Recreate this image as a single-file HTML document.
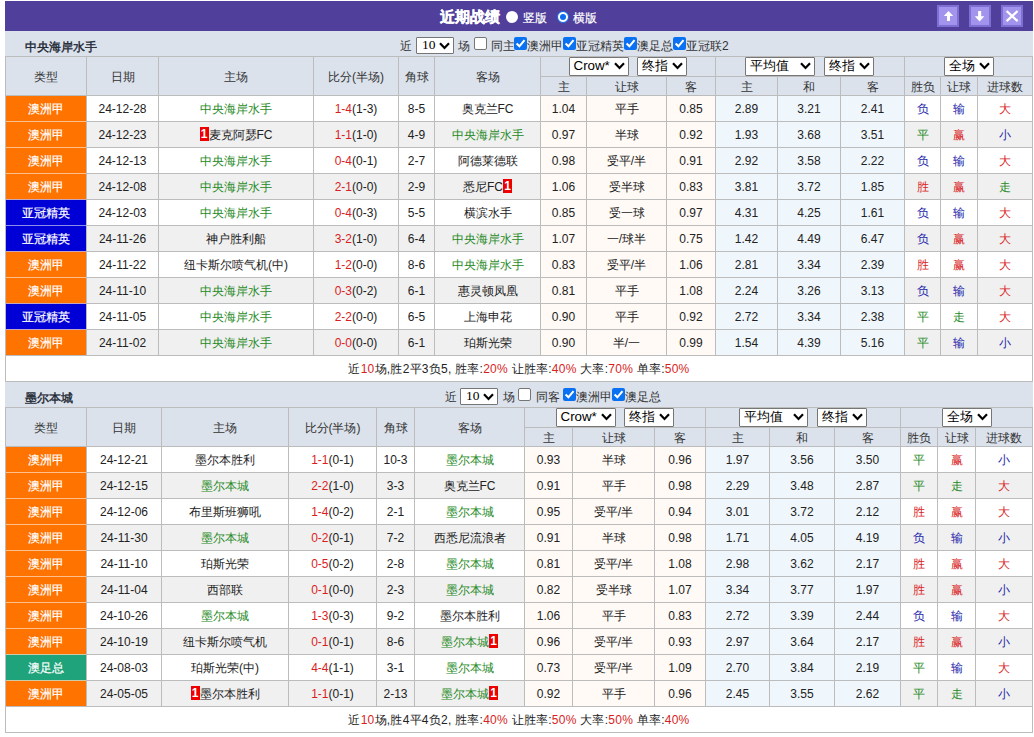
<!DOCTYPE html><html><head><meta charset="utf-8"><style>
*{margin:0;padding:0;box-sizing:content-box}
html,body{width:1034px;height:737px;overflow:hidden;background:#fff}
body{position:relative;font-family:"Liberation Sans",sans-serif;font-size:12px;color:#333}
body>div,body>svg{position:absolute}
.t{white-space:nowrap;overflow:visible}
.sel{position:absolute;background:#fff;border:1px solid #767676;border-radius:1px;color:#000}
.sel span{position:absolute;left:3.5px;top:-1px}
.sel .chev{position:absolute;right:3px}
.cb{position:absolute;width:11px;height:11px;border:1px solid #767676;border-radius:2px;background:#fff}
.cb.on{border:none;width:13px;height:13px;background:#0a72f2}
.cb svg{position:absolute;left:0;top:0}
.rc{display:inline-block;background:#e00;color:#fff;font-weight:bold;width:9px;height:14px;line-height:14px;text-align:center;font-size:12px;vertical-align:middle;position:relative;top:-2px}
</style></head><body>
<div style="left:5px;top:1px;width:1028px;height:30px;background:#50409b"></div>
<div class="t" style="left:440px;top:2px;width:70px;height:30px;line-height:30px;color:#fff;font-weight:bold;font-size:15px;-webkit-text-stroke:0.35px #fff">近期战绩</div>
<div style="left:506px;top:11px;width:12px;height:12px;border-radius:50%;background:#fff"></div>
<div class="t" style="left:523px;top:3px;width:30px;height:30px;line-height:30px;color:#fff;font-size:12px;-webkit-text-stroke:0.2px #fff">竖版</div>
<div style="left:557px;top:11px;width:10px;height:10px;border-radius:50%;background:#fff;border:1px solid #0a6cf0"></div>
<div style="left:560px;top:14px;width:6px;height:6px;border-radius:50%;background:#0a6cf0"></div>
<div class="t" style="left:573px;top:3px;width:30px;height:30px;line-height:30px;color:#fff;font-size:12px;-webkit-text-stroke:0.2px #fff">横版</div>
<div style="left:937px;top:5px;width:22px;height:22px;background:#7e6fd3"></div>
<div style="left:939px;top:7px;width:18px;height:18px;background:#a293ec"></div>
<svg style="position:absolute;left:937px;top:5px" width="22" height="22" viewBox="0 0 22 22"><path d="M11.5 6 L16.2 11 L13 11 L13 16 L10 16 L10 11 L6.8 11 Z" fill="#fff"/></svg>
<div style="left:969px;top:5px;width:22px;height:22px;background:#7e6fd3"></div>
<div style="left:971px;top:7px;width:18px;height:18px;background:#a293ec"></div>
<svg style="position:absolute;left:969px;top:5px" width="22" height="22" viewBox="0 0 22 22"><path d="M10.6 16.6 L15.4 11.2 L12.2 11.2 L12.2 6 L9.1 6 L9.1 11.2 L5.8 11.2 Z" fill="#fff"/></svg>
<div style="left:1001px;top:5px;width:22px;height:22px;background:#7e6fd3"></div>
<div style="left:1003px;top:7px;width:18px;height:18px;background:#a293ec"></div>
<svg style="position:absolute;left:1001px;top:5px" width="22" height="22" viewBox="0 0 22 22"><path d="M5.6 6 L16.6 16.2 M16.6 6 L5.6 16.2" stroke="#fff" stroke-width="2.3"/></svg>
<div style="left:5px;top:31px;width:1028px;height:25px;background:#dbe2ec"></div>
<div class="t" style="left:25px;top:35px;width:200px;height:25px;line-height:25px;font-size:12px;color:#1e2834;-webkit-text-stroke:0.4px #1e2834">中央海岸水手</div>
<div class="t" style="left:400px;top:34px;width:14px;height:25px;line-height:25px;font-size:12px;color:#333">近</div>
<div class="sel" style="left:416px;top:37px;width:36px;height:15px;"><span style="font-size:12px;line-height:15px;font-family:'Liberation Serif',serif;left:5px;top:-1px;font-size:13.5px;">10</span><svg class="chev" style="top:4px" width="11" height="8" viewBox="0 0 11 8"><path d="M1 1.2 L5.5 5.9 L10 1.2" stroke="#000" stroke-width="2.2" fill="none"/></svg></div>
<div class="t" style="left:458px;top:34px;width:14px;height:25px;line-height:25px;font-size:12px;color:#333">场</div>
<div class="cb" style="left:474px;top:37px"></div>
<div class="t" style="left:491px;top:34px;width:30px;height:25px;line-height:25px;font-size:12px;color:#333">同主</div>
<div class="cb on" style="left:514px;top:37px"><svg width="13" height="13" viewBox="0 0 13 13"><path d="M2.6 6.6 L5.4 9.3 L10.5 3.2" stroke="#fff" stroke-width="2.1" fill="none"/></svg></div>
<div class="t" style="left:527px;top:34px;width:60px;height:25px;line-height:25px;font-size:12px;color:#333">澳洲甲</div>
<div class="cb on" style="left:563px;top:37px"><svg width="13" height="13" viewBox="0 0 13 13"><path d="M2.6 6.6 L5.4 9.3 L10.5 3.2" stroke="#fff" stroke-width="2.1" fill="none"/></svg></div>
<div class="t" style="left:576px;top:34px;width:60px;height:25px;line-height:25px;font-size:12px;color:#333">亚冠精英</div>
<div class="cb on" style="left:624px;top:37px"><svg width="13" height="13" viewBox="0 0 13 13"><path d="M2.6 6.6 L5.4 9.3 L10.5 3.2" stroke="#fff" stroke-width="2.1" fill="none"/></svg></div>
<div class="t" style="left:637px;top:34px;width:60px;height:25px;line-height:25px;font-size:12px;color:#333">澳足总</div>
<div class="cb on" style="left:673px;top:37px"><svg width="13" height="13" viewBox="0 0 13 13"><path d="M2.6 6.6 L5.4 9.3 L10.5 3.2" stroke="#fff" stroke-width="2.1" fill="none"/></svg></div>
<div class="t" style="left:686px;top:34px;width:60px;height:25px;line-height:25px;font-size:12px;color:#333">亚冠联2</div>
<div style="left:5px;top:56px;width:1028px;height:39px;background:#dbe2ec"></div>
<div style="left:5px;top:95px;width:1028px;height:26px;background:#fff"></div>
<div style="left:540px;top:95px;width:175px;height:26px;background:#fffaf6"></div>
<div style="left:715px;top:95px;width:189px;height:26px;background:#f0f7fc"></div>
<div style="left:5px;top:95px;width:81px;height:26px;background:#ff7300"></div>
<div style="left:5px;top:121px;width:1028px;height:26px;background:#f0f0f0"></div>
<div style="left:540px;top:121px;width:175px;height:26px;background:#fffaf6"></div>
<div style="left:715px;top:121px;width:189px;height:26px;background:#f0f7fc"></div>
<div style="left:5px;top:121px;width:81px;height:26px;background:#ff7300"></div>
<div style="left:5px;top:147px;width:1028px;height:26px;background:#fff"></div>
<div style="left:540px;top:147px;width:175px;height:26px;background:#fffaf6"></div>
<div style="left:715px;top:147px;width:189px;height:26px;background:#f0f7fc"></div>
<div style="left:5px;top:147px;width:81px;height:26px;background:#ff7300"></div>
<div style="left:5px;top:173px;width:1028px;height:26px;background:#f0f0f0"></div>
<div style="left:540px;top:173px;width:175px;height:26px;background:#fffaf6"></div>
<div style="left:715px;top:173px;width:189px;height:26px;background:#f0f7fc"></div>
<div style="left:5px;top:173px;width:81px;height:26px;background:#ff7300"></div>
<div style="left:5px;top:199px;width:1028px;height:26px;background:#fff"></div>
<div style="left:540px;top:199px;width:175px;height:26px;background:#fffaf6"></div>
<div style="left:715px;top:199px;width:189px;height:26px;background:#f0f7fc"></div>
<div style="left:5px;top:199px;width:81px;height:26px;background:#0000d6"></div>
<div style="left:5px;top:225px;width:1028px;height:26px;background:#f0f0f0"></div>
<div style="left:540px;top:225px;width:175px;height:26px;background:#fffaf6"></div>
<div style="left:715px;top:225px;width:189px;height:26px;background:#f0f7fc"></div>
<div style="left:5px;top:225px;width:81px;height:26px;background:#0000d6"></div>
<div style="left:5px;top:251px;width:1028px;height:26px;background:#fff"></div>
<div style="left:540px;top:251px;width:175px;height:26px;background:#fffaf6"></div>
<div style="left:715px;top:251px;width:189px;height:26px;background:#f0f7fc"></div>
<div style="left:5px;top:251px;width:81px;height:26px;background:#ff7300"></div>
<div style="left:5px;top:277px;width:1028px;height:26px;background:#f0f0f0"></div>
<div style="left:540px;top:277px;width:175px;height:26px;background:#fffaf6"></div>
<div style="left:715px;top:277px;width:189px;height:26px;background:#f0f7fc"></div>
<div style="left:5px;top:277px;width:81px;height:26px;background:#ff7300"></div>
<div style="left:5px;top:303px;width:1028px;height:26px;background:#fff"></div>
<div style="left:540px;top:303px;width:175px;height:26px;background:#fffaf6"></div>
<div style="left:715px;top:303px;width:189px;height:26px;background:#f0f7fc"></div>
<div style="left:5px;top:303px;width:81px;height:26px;background:#0000d6"></div>
<div style="left:5px;top:329px;width:1028px;height:26px;background:#f0f0f0"></div>
<div style="left:540px;top:329px;width:175px;height:26px;background:#fffaf6"></div>
<div style="left:715px;top:329px;width:189px;height:26px;background:#f0f7fc"></div>
<div style="left:5px;top:329px;width:81px;height:26px;background:#ff7300"></div>
<div style="left:5px;top:355px;width:1028px;height:26px;background:#fff"></div>
<div style="left:5px;top:56px;width:1028px;height:1px;background:#bcbcbc"></div>
<div style="left:540px;top:76px;width:493px;height:1px;background:#bcbcbc"></div>
<div style="left:5px;top:95px;width:1028px;height:1px;background:#bcbcbc"></div>
<div style="left:5px;top:121px;width:1028px;height:1px;background:#bcbcbc"></div>
<div style="left:5px;top:147px;width:1028px;height:1px;background:#bcbcbc"></div>
<div style="left:5px;top:173px;width:1028px;height:1px;background:#bcbcbc"></div>
<div style="left:5px;top:199px;width:1028px;height:1px;background:#bcbcbc"></div>
<div style="left:5px;top:225px;width:1028px;height:1px;background:#bcbcbc"></div>
<div style="left:5px;top:251px;width:1028px;height:1px;background:#bcbcbc"></div>
<div style="left:5px;top:277px;width:1028px;height:1px;background:#bcbcbc"></div>
<div style="left:5px;top:303px;width:1028px;height:1px;background:#bcbcbc"></div>
<div style="left:5px;top:329px;width:1028px;height:1px;background:#bcbcbc"></div>
<div style="left:5px;top:355px;width:1028px;height:1px;background:#bcbcbc"></div>
<div style="left:5px;top:381px;width:1028px;height:1px;background:#bcbcbc"></div>
<div style="left:6px;top:121px;width:80px;height:1px;background:#ffc08c"></div>
<div style="left:6px;top:147px;width:80px;height:1px;background:#ffc08c"></div>
<div style="left:6px;top:173px;width:80px;height:1px;background:#ffc08c"></div>
<div style="left:6px;top:199px;width:80px;height:1px;background:#c5a6bc"></div>
<div style="left:6px;top:225px;width:80px;height:1px;background:#8c8cec"></div>
<div style="left:6px;top:251px;width:80px;height:1px;background:#c5a6bc"></div>
<div style="left:6px;top:277px;width:80px;height:1px;background:#ffc08c"></div>
<div style="left:6px;top:303px;width:80px;height:1px;background:#c5a6bc"></div>
<div style="left:6px;top:329px;width:80px;height:1px;background:#c5a6bc"></div>
<div style="left:5px;top:56px;width:1px;height:326px;background:#bcbcbc"></div>
<div style="left:86px;top:56px;width:1px;height:300px;background:#bcbcbc"></div>
<div style="left:158px;top:56px;width:1px;height:300px;background:#bcbcbc"></div>
<div style="left:313px;top:56px;width:1px;height:300px;background:#bcbcbc"></div>
<div style="left:398px;top:56px;width:1px;height:300px;background:#bcbcbc"></div>
<div style="left:434px;top:56px;width:1px;height:300px;background:#bcbcbc"></div>
<div style="left:540px;top:56px;width:1px;height:300px;background:#bcbcbc"></div>
<div style="left:586px;top:76px;width:1px;height:280px;background:#bcbcbc"></div>
<div style="left:666px;top:76px;width:1px;height:280px;background:#bcbcbc"></div>
<div style="left:715px;top:56px;width:1px;height:300px;background:#bcbcbc"></div>
<div style="left:777px;top:76px;width:1px;height:280px;background:#bcbcbc"></div>
<div style="left:840px;top:76px;width:1px;height:280px;background:#bcbcbc"></div>
<div style="left:904px;top:56px;width:1px;height:300px;background:#bcbcbc"></div>
<div style="left:940px;top:76px;width:1px;height:280px;background:#bcbcbc"></div>
<div style="left:977px;top:76px;width:1px;height:280px;background:#bcbcbc"></div>
<div style="left:1032px;top:56px;width:1px;height:326px;background:#bcbcbc"></div>
<div class="t" style="left:6px;top:58px;width:80px;height:38px;line-height:38px;text-align:center;font-size:12px;color:#333;">类型</div>
<div class="t" style="left:87px;top:58px;width:71px;height:38px;line-height:38px;text-align:center;font-size:12px;color:#333;">日期</div>
<div class="t" style="left:159px;top:58px;width:154px;height:38px;line-height:38px;text-align:center;font-size:12px;color:#333;">主场</div>
<div class="t" style="left:314px;top:58px;width:84px;height:38px;line-height:38px;text-align:center;font-size:12px;color:#333;">比分(半场)</div>
<div class="t" style="left:399px;top:58px;width:35px;height:38px;line-height:38px;text-align:center;font-size:12px;color:#333;">角球</div>
<div class="t" style="left:435px;top:58px;width:105px;height:38px;line-height:38px;text-align:center;font-size:12px;color:#333;">客场</div>
<div class="t" style="left:541px;top:78px;width:45px;height:18px;line-height:18px;text-align:center;font-size:12px;color:#333;">主</div>
<div class="t" style="left:587px;top:78px;width:79px;height:18px;line-height:18px;text-align:center;font-size:12px;color:#333;">让球</div>
<div class="t" style="left:667px;top:78px;width:48px;height:18px;line-height:18px;text-align:center;font-size:12px;color:#333;">客</div>
<div class="t" style="left:716px;top:78px;width:61px;height:18px;line-height:18px;text-align:center;font-size:12px;color:#333;">主</div>
<div class="t" style="left:778px;top:78px;width:62px;height:18px;line-height:18px;text-align:center;font-size:12px;color:#333;">和</div>
<div class="t" style="left:841px;top:78px;width:63px;height:18px;line-height:18px;text-align:center;font-size:12px;color:#333;">客</div>
<div class="t" style="left:905px;top:78px;width:35px;height:18px;line-height:18px;text-align:center;font-size:12px;color:#333;">胜负</div>
<div class="t" style="left:941px;top:78px;width:36px;height:18px;line-height:18px;text-align:center;font-size:12px;color:#333;">让球</div>
<div class="t" style="left:978px;top:78px;width:54px;height:18px;line-height:18px;text-align:center;font-size:12px;color:#333;">进球数</div>
<div class="sel" style="left:569px;top:57px;width:58px;height:17px;"><span style="font-size:13.33px;line-height:17px;">Crow*</span><svg class="chev" style="top:4px" width="11" height="8" viewBox="0 0 11 8"><path d="M1 1.2 L5.5 5.9 L10 1.2" stroke="#000" stroke-width="2.2" fill="none"/></svg></div>
<div class="sel" style="left:637px;top:57px;width:48px;height:17px;"><span style="font-size:13.33px;line-height:17px;">终指</span><svg class="chev" style="top:4px" width="11" height="8" viewBox="0 0 11 8"><path d="M1 1.2 L5.5 5.9 L10 1.2" stroke="#000" stroke-width="2.2" fill="none"/></svg></div>
<div class="sel" style="left:745px;top:57px;width:68px;height:17px;"><span style="font-size:13.33px;line-height:17px;">平均值</span><svg class="chev" style="top:4px" width="11" height="8" viewBox="0 0 11 8"><path d="M1 1.2 L5.5 5.9 L10 1.2" stroke="#000" stroke-width="2.2" fill="none"/></svg></div>
<div class="sel" style="left:824px;top:57px;width:48px;height:17px;"><span style="font-size:13.33px;line-height:17px;">终指</span><svg class="chev" style="top:4px" width="11" height="8" viewBox="0 0 11 8"><path d="M1 1.2 L5.5 5.9 L10 1.2" stroke="#000" stroke-width="2.2" fill="none"/></svg></div>
<div class="sel" style="left:944px;top:57px;width:48px;height:17px;"><span style="font-size:13.33px;line-height:17px;">全场</span><svg class="chev" style="top:4px" width="11" height="8" viewBox="0 0 11 8"><path d="M1 1.2 L5.5 5.9 L10 1.2" stroke="#000" stroke-width="2.2" fill="none"/></svg></div>
<div class="t" style="left:6px;top:97px;width:80px;height:25px;line-height:25px;text-align:center;font-size:12px;color:#222;color:#fff;-webkit-text-stroke:0.2px #fff">澳洲甲</div>
<div class="t" style="left:87px;top:97px;width:71px;height:25px;line-height:25px;text-align:center;font-size:12px;color:#222;">24-12-28</div>
<div class="t" style="left:159px;top:97px;width:154px;height:25px;line-height:25px;text-align:center;font-size:12px;color:#222;"><span style="color:#268a26">中央海岸水手</span></div>
<div class="t" style="left:314px;top:97px;width:84px;height:25px;line-height:25px;text-align:center;font-size:12px;color:#222;"><span style="color:#d81e1e">1-4</span>(1-3)</div>
<div class="t" style="left:399px;top:97px;width:35px;height:25px;line-height:25px;text-align:center;font-size:12px;color:#222;">8-5</div>
<div class="t" style="left:435px;top:97px;width:105px;height:25px;line-height:25px;text-align:center;font-size:12px;color:#222;">奥克兰FC</div>
<div class="t" style="left:541px;top:97px;width:45px;height:25px;line-height:25px;text-align:center;font-size:12px;color:#222;">1.04</div>
<div class="t" style="left:587px;top:97px;width:79px;height:25px;line-height:25px;text-align:center;font-size:12px;color:#222;">平手</div>
<div class="t" style="left:667px;top:97px;width:48px;height:25px;line-height:25px;text-align:center;font-size:12px;color:#222;">0.85</div>
<div class="t" style="left:716px;top:97px;width:61px;height:25px;line-height:25px;text-align:center;font-size:12px;color:#222;">2.89</div>
<div class="t" style="left:778px;top:97px;width:62px;height:25px;line-height:25px;text-align:center;font-size:12px;color:#222;">3.21</div>
<div class="t" style="left:841px;top:97px;width:63px;height:25px;line-height:25px;text-align:center;font-size:12px;color:#222;">2.41</div>
<div class="t" style="left:905px;top:97px;width:35px;height:25px;line-height:25px;text-align:center;font-size:12px;color:#222;color:#1e1eaa">负</div>
<div class="t" style="left:941px;top:97px;width:36px;height:25px;line-height:25px;text-align:center;font-size:12px;color:#222;color:#1e1eaa">输</div>
<div class="t" style="left:978px;top:97px;width:54px;height:25px;line-height:25px;text-align:center;font-size:12px;color:#222;color:#d92424">大</div>
<div class="t" style="left:6px;top:123px;width:80px;height:25px;line-height:25px;text-align:center;font-size:12px;color:#222;color:#fff;-webkit-text-stroke:0.2px #fff">澳洲甲</div>
<div class="t" style="left:87px;top:123px;width:71px;height:25px;line-height:25px;text-align:center;font-size:12px;color:#222;">24-12-23</div>
<div class="t" style="left:159px;top:123px;width:154px;height:25px;line-height:25px;text-align:center;font-size:12px;color:#222;"><span class="rc">1</span>麦克阿瑟FC</div>
<div class="t" style="left:314px;top:123px;width:84px;height:25px;line-height:25px;text-align:center;font-size:12px;color:#222;"><span style="color:#d81e1e">1-1</span>(1-0)</div>
<div class="t" style="left:399px;top:123px;width:35px;height:25px;line-height:25px;text-align:center;font-size:12px;color:#222;">4-9</div>
<div class="t" style="left:435px;top:123px;width:105px;height:25px;line-height:25px;text-align:center;font-size:12px;color:#222;"><span style="color:#268a26">中央海岸水手</span></div>
<div class="t" style="left:541px;top:123px;width:45px;height:25px;line-height:25px;text-align:center;font-size:12px;color:#222;">0.97</div>
<div class="t" style="left:587px;top:123px;width:79px;height:25px;line-height:25px;text-align:center;font-size:12px;color:#222;">半球</div>
<div class="t" style="left:667px;top:123px;width:48px;height:25px;line-height:25px;text-align:center;font-size:12px;color:#222;">0.92</div>
<div class="t" style="left:716px;top:123px;width:61px;height:25px;line-height:25px;text-align:center;font-size:12px;color:#222;">1.93</div>
<div class="t" style="left:778px;top:123px;width:62px;height:25px;line-height:25px;text-align:center;font-size:12px;color:#222;">3.68</div>
<div class="t" style="left:841px;top:123px;width:63px;height:25px;line-height:25px;text-align:center;font-size:12px;color:#222;">3.51</div>
<div class="t" style="left:905px;top:123px;width:35px;height:25px;line-height:25px;text-align:center;font-size:12px;color:#222;color:#1f8a1f">平</div>
<div class="t" style="left:941px;top:123px;width:36px;height:25px;line-height:25px;text-align:center;font-size:12px;color:#222;color:#d92424">赢</div>
<div class="t" style="left:978px;top:123px;width:54px;height:25px;line-height:25px;text-align:center;font-size:12px;color:#222;color:#1e1eaa">小</div>
<div class="t" style="left:6px;top:149px;width:80px;height:25px;line-height:25px;text-align:center;font-size:12px;color:#222;color:#fff;-webkit-text-stroke:0.2px #fff">澳洲甲</div>
<div class="t" style="left:87px;top:149px;width:71px;height:25px;line-height:25px;text-align:center;font-size:12px;color:#222;">24-12-13</div>
<div class="t" style="left:159px;top:149px;width:154px;height:25px;line-height:25px;text-align:center;font-size:12px;color:#222;"><span style="color:#268a26">中央海岸水手</span></div>
<div class="t" style="left:314px;top:149px;width:84px;height:25px;line-height:25px;text-align:center;font-size:12px;color:#222;"><span style="color:#d81e1e">0-4</span>(0-1)</div>
<div class="t" style="left:399px;top:149px;width:35px;height:25px;line-height:25px;text-align:center;font-size:12px;color:#222;">2-7</div>
<div class="t" style="left:435px;top:149px;width:105px;height:25px;line-height:25px;text-align:center;font-size:12px;color:#222;">阿德莱德联</div>
<div class="t" style="left:541px;top:149px;width:45px;height:25px;line-height:25px;text-align:center;font-size:12px;color:#222;">0.98</div>
<div class="t" style="left:587px;top:149px;width:79px;height:25px;line-height:25px;text-align:center;font-size:12px;color:#222;">受平/半</div>
<div class="t" style="left:667px;top:149px;width:48px;height:25px;line-height:25px;text-align:center;font-size:12px;color:#222;">0.91</div>
<div class="t" style="left:716px;top:149px;width:61px;height:25px;line-height:25px;text-align:center;font-size:12px;color:#222;">2.92</div>
<div class="t" style="left:778px;top:149px;width:62px;height:25px;line-height:25px;text-align:center;font-size:12px;color:#222;">3.58</div>
<div class="t" style="left:841px;top:149px;width:63px;height:25px;line-height:25px;text-align:center;font-size:12px;color:#222;">2.22</div>
<div class="t" style="left:905px;top:149px;width:35px;height:25px;line-height:25px;text-align:center;font-size:12px;color:#222;color:#1e1eaa">负</div>
<div class="t" style="left:941px;top:149px;width:36px;height:25px;line-height:25px;text-align:center;font-size:12px;color:#222;color:#1e1eaa">输</div>
<div class="t" style="left:978px;top:149px;width:54px;height:25px;line-height:25px;text-align:center;font-size:12px;color:#222;color:#d92424">大</div>
<div class="t" style="left:6px;top:175px;width:80px;height:25px;line-height:25px;text-align:center;font-size:12px;color:#222;color:#fff;-webkit-text-stroke:0.2px #fff">澳洲甲</div>
<div class="t" style="left:87px;top:175px;width:71px;height:25px;line-height:25px;text-align:center;font-size:12px;color:#222;">24-12-08</div>
<div class="t" style="left:159px;top:175px;width:154px;height:25px;line-height:25px;text-align:center;font-size:12px;color:#222;"><span style="color:#268a26">中央海岸水手</span></div>
<div class="t" style="left:314px;top:175px;width:84px;height:25px;line-height:25px;text-align:center;font-size:12px;color:#222;"><span style="color:#d81e1e">2-1</span>(0-0)</div>
<div class="t" style="left:399px;top:175px;width:35px;height:25px;line-height:25px;text-align:center;font-size:12px;color:#222;">2-9</div>
<div class="t" style="left:435px;top:175px;width:105px;height:25px;line-height:25px;text-align:center;font-size:12px;color:#222;">悉尼FC<span class="rc">1</span></div>
<div class="t" style="left:541px;top:175px;width:45px;height:25px;line-height:25px;text-align:center;font-size:12px;color:#222;">1.06</div>
<div class="t" style="left:587px;top:175px;width:79px;height:25px;line-height:25px;text-align:center;font-size:12px;color:#222;">受半球</div>
<div class="t" style="left:667px;top:175px;width:48px;height:25px;line-height:25px;text-align:center;font-size:12px;color:#222;">0.83</div>
<div class="t" style="left:716px;top:175px;width:61px;height:25px;line-height:25px;text-align:center;font-size:12px;color:#222;">3.81</div>
<div class="t" style="left:778px;top:175px;width:62px;height:25px;line-height:25px;text-align:center;font-size:12px;color:#222;">3.72</div>
<div class="t" style="left:841px;top:175px;width:63px;height:25px;line-height:25px;text-align:center;font-size:12px;color:#222;">1.85</div>
<div class="t" style="left:905px;top:175px;width:35px;height:25px;line-height:25px;text-align:center;font-size:12px;color:#222;color:#d92424">胜</div>
<div class="t" style="left:941px;top:175px;width:36px;height:25px;line-height:25px;text-align:center;font-size:12px;color:#222;color:#d92424">赢</div>
<div class="t" style="left:978px;top:175px;width:54px;height:25px;line-height:25px;text-align:center;font-size:12px;color:#222;color:#1f8a1f">走</div>
<div class="t" style="left:6px;top:201px;width:80px;height:25px;line-height:25px;text-align:center;font-size:12px;color:#222;color:#fff;-webkit-text-stroke:0.2px #fff">亚冠精英</div>
<div class="t" style="left:87px;top:201px;width:71px;height:25px;line-height:25px;text-align:center;font-size:12px;color:#222;">24-12-03</div>
<div class="t" style="left:159px;top:201px;width:154px;height:25px;line-height:25px;text-align:center;font-size:12px;color:#222;"><span style="color:#268a26">中央海岸水手</span></div>
<div class="t" style="left:314px;top:201px;width:84px;height:25px;line-height:25px;text-align:center;font-size:12px;color:#222;"><span style="color:#d81e1e">0-4</span>(0-3)</div>
<div class="t" style="left:399px;top:201px;width:35px;height:25px;line-height:25px;text-align:center;font-size:12px;color:#222;">5-5</div>
<div class="t" style="left:435px;top:201px;width:105px;height:25px;line-height:25px;text-align:center;font-size:12px;color:#222;">横滨水手</div>
<div class="t" style="left:541px;top:201px;width:45px;height:25px;line-height:25px;text-align:center;font-size:12px;color:#222;">0.85</div>
<div class="t" style="left:587px;top:201px;width:79px;height:25px;line-height:25px;text-align:center;font-size:12px;color:#222;">受一球</div>
<div class="t" style="left:667px;top:201px;width:48px;height:25px;line-height:25px;text-align:center;font-size:12px;color:#222;">0.97</div>
<div class="t" style="left:716px;top:201px;width:61px;height:25px;line-height:25px;text-align:center;font-size:12px;color:#222;">4.31</div>
<div class="t" style="left:778px;top:201px;width:62px;height:25px;line-height:25px;text-align:center;font-size:12px;color:#222;">4.25</div>
<div class="t" style="left:841px;top:201px;width:63px;height:25px;line-height:25px;text-align:center;font-size:12px;color:#222;">1.61</div>
<div class="t" style="left:905px;top:201px;width:35px;height:25px;line-height:25px;text-align:center;font-size:12px;color:#222;color:#1e1eaa">负</div>
<div class="t" style="left:941px;top:201px;width:36px;height:25px;line-height:25px;text-align:center;font-size:12px;color:#222;color:#1e1eaa">输</div>
<div class="t" style="left:978px;top:201px;width:54px;height:25px;line-height:25px;text-align:center;font-size:12px;color:#222;color:#d92424">大</div>
<div class="t" style="left:6px;top:227px;width:80px;height:25px;line-height:25px;text-align:center;font-size:12px;color:#222;color:#fff;-webkit-text-stroke:0.2px #fff">亚冠精英</div>
<div class="t" style="left:87px;top:227px;width:71px;height:25px;line-height:25px;text-align:center;font-size:12px;color:#222;">24-11-26</div>
<div class="t" style="left:159px;top:227px;width:154px;height:25px;line-height:25px;text-align:center;font-size:12px;color:#222;">神户胜利船</div>
<div class="t" style="left:314px;top:227px;width:84px;height:25px;line-height:25px;text-align:center;font-size:12px;color:#222;"><span style="color:#d81e1e">3-2</span>(1-0)</div>
<div class="t" style="left:399px;top:227px;width:35px;height:25px;line-height:25px;text-align:center;font-size:12px;color:#222;">6-4</div>
<div class="t" style="left:435px;top:227px;width:105px;height:25px;line-height:25px;text-align:center;font-size:12px;color:#222;"><span style="color:#268a26">中央海岸水手</span></div>
<div class="t" style="left:541px;top:227px;width:45px;height:25px;line-height:25px;text-align:center;font-size:12px;color:#222;">1.07</div>
<div class="t" style="left:587px;top:227px;width:79px;height:25px;line-height:25px;text-align:center;font-size:12px;color:#222;">一/球半</div>
<div class="t" style="left:667px;top:227px;width:48px;height:25px;line-height:25px;text-align:center;font-size:12px;color:#222;">0.75</div>
<div class="t" style="left:716px;top:227px;width:61px;height:25px;line-height:25px;text-align:center;font-size:12px;color:#222;">1.42</div>
<div class="t" style="left:778px;top:227px;width:62px;height:25px;line-height:25px;text-align:center;font-size:12px;color:#222;">4.49</div>
<div class="t" style="left:841px;top:227px;width:63px;height:25px;line-height:25px;text-align:center;font-size:12px;color:#222;">6.47</div>
<div class="t" style="left:905px;top:227px;width:35px;height:25px;line-height:25px;text-align:center;font-size:12px;color:#222;color:#1e1eaa">负</div>
<div class="t" style="left:941px;top:227px;width:36px;height:25px;line-height:25px;text-align:center;font-size:12px;color:#222;color:#d92424">赢</div>
<div class="t" style="left:978px;top:227px;width:54px;height:25px;line-height:25px;text-align:center;font-size:12px;color:#222;color:#d92424">大</div>
<div class="t" style="left:6px;top:253px;width:80px;height:25px;line-height:25px;text-align:center;font-size:12px;color:#222;color:#fff;-webkit-text-stroke:0.2px #fff">澳洲甲</div>
<div class="t" style="left:87px;top:253px;width:71px;height:25px;line-height:25px;text-align:center;font-size:12px;color:#222;">24-11-22</div>
<div class="t" style="left:159px;top:253px;width:154px;height:25px;line-height:25px;text-align:center;font-size:12px;color:#222;">纽卡斯尔喷气机(中)</div>
<div class="t" style="left:314px;top:253px;width:84px;height:25px;line-height:25px;text-align:center;font-size:12px;color:#222;"><span style="color:#d81e1e">1-2</span>(0-0)</div>
<div class="t" style="left:399px;top:253px;width:35px;height:25px;line-height:25px;text-align:center;font-size:12px;color:#222;">8-6</div>
<div class="t" style="left:435px;top:253px;width:105px;height:25px;line-height:25px;text-align:center;font-size:12px;color:#222;"><span style="color:#268a26">中央海岸水手</span></div>
<div class="t" style="left:541px;top:253px;width:45px;height:25px;line-height:25px;text-align:center;font-size:12px;color:#222;">0.83</div>
<div class="t" style="left:587px;top:253px;width:79px;height:25px;line-height:25px;text-align:center;font-size:12px;color:#222;">受平/半</div>
<div class="t" style="left:667px;top:253px;width:48px;height:25px;line-height:25px;text-align:center;font-size:12px;color:#222;">1.06</div>
<div class="t" style="left:716px;top:253px;width:61px;height:25px;line-height:25px;text-align:center;font-size:12px;color:#222;">2.81</div>
<div class="t" style="left:778px;top:253px;width:62px;height:25px;line-height:25px;text-align:center;font-size:12px;color:#222;">3.34</div>
<div class="t" style="left:841px;top:253px;width:63px;height:25px;line-height:25px;text-align:center;font-size:12px;color:#222;">2.39</div>
<div class="t" style="left:905px;top:253px;width:35px;height:25px;line-height:25px;text-align:center;font-size:12px;color:#222;color:#d92424">胜</div>
<div class="t" style="left:941px;top:253px;width:36px;height:25px;line-height:25px;text-align:center;font-size:12px;color:#222;color:#d92424">赢</div>
<div class="t" style="left:978px;top:253px;width:54px;height:25px;line-height:25px;text-align:center;font-size:12px;color:#222;color:#d92424">大</div>
<div class="t" style="left:6px;top:279px;width:80px;height:25px;line-height:25px;text-align:center;font-size:12px;color:#222;color:#fff;-webkit-text-stroke:0.2px #fff">澳洲甲</div>
<div class="t" style="left:87px;top:279px;width:71px;height:25px;line-height:25px;text-align:center;font-size:12px;color:#222;">24-11-10</div>
<div class="t" style="left:159px;top:279px;width:154px;height:25px;line-height:25px;text-align:center;font-size:12px;color:#222;"><span style="color:#268a26">中央海岸水手</span></div>
<div class="t" style="left:314px;top:279px;width:84px;height:25px;line-height:25px;text-align:center;font-size:12px;color:#222;"><span style="color:#d81e1e">0-3</span>(0-2)</div>
<div class="t" style="left:399px;top:279px;width:35px;height:25px;line-height:25px;text-align:center;font-size:12px;color:#222;">6-1</div>
<div class="t" style="left:435px;top:279px;width:105px;height:25px;line-height:25px;text-align:center;font-size:12px;color:#222;">惠灵顿凤凰</div>
<div class="t" style="left:541px;top:279px;width:45px;height:25px;line-height:25px;text-align:center;font-size:12px;color:#222;">0.81</div>
<div class="t" style="left:587px;top:279px;width:79px;height:25px;line-height:25px;text-align:center;font-size:12px;color:#222;">平手</div>
<div class="t" style="left:667px;top:279px;width:48px;height:25px;line-height:25px;text-align:center;font-size:12px;color:#222;">1.08</div>
<div class="t" style="left:716px;top:279px;width:61px;height:25px;line-height:25px;text-align:center;font-size:12px;color:#222;">2.24</div>
<div class="t" style="left:778px;top:279px;width:62px;height:25px;line-height:25px;text-align:center;font-size:12px;color:#222;">3.26</div>
<div class="t" style="left:841px;top:279px;width:63px;height:25px;line-height:25px;text-align:center;font-size:12px;color:#222;">3.13</div>
<div class="t" style="left:905px;top:279px;width:35px;height:25px;line-height:25px;text-align:center;font-size:12px;color:#222;color:#1e1eaa">负</div>
<div class="t" style="left:941px;top:279px;width:36px;height:25px;line-height:25px;text-align:center;font-size:12px;color:#222;color:#1e1eaa">输</div>
<div class="t" style="left:978px;top:279px;width:54px;height:25px;line-height:25px;text-align:center;font-size:12px;color:#222;color:#d92424">大</div>
<div class="t" style="left:6px;top:305px;width:80px;height:25px;line-height:25px;text-align:center;font-size:12px;color:#222;color:#fff;-webkit-text-stroke:0.2px #fff">亚冠精英</div>
<div class="t" style="left:87px;top:305px;width:71px;height:25px;line-height:25px;text-align:center;font-size:12px;color:#222;">24-11-05</div>
<div class="t" style="left:159px;top:305px;width:154px;height:25px;line-height:25px;text-align:center;font-size:12px;color:#222;"><span style="color:#268a26">中央海岸水手</span></div>
<div class="t" style="left:314px;top:305px;width:84px;height:25px;line-height:25px;text-align:center;font-size:12px;color:#222;"><span style="color:#d81e1e">2-2</span>(0-0)</div>
<div class="t" style="left:399px;top:305px;width:35px;height:25px;line-height:25px;text-align:center;font-size:12px;color:#222;">6-5</div>
<div class="t" style="left:435px;top:305px;width:105px;height:25px;line-height:25px;text-align:center;font-size:12px;color:#222;">上海申花</div>
<div class="t" style="left:541px;top:305px;width:45px;height:25px;line-height:25px;text-align:center;font-size:12px;color:#222;">0.90</div>
<div class="t" style="left:587px;top:305px;width:79px;height:25px;line-height:25px;text-align:center;font-size:12px;color:#222;">平手</div>
<div class="t" style="left:667px;top:305px;width:48px;height:25px;line-height:25px;text-align:center;font-size:12px;color:#222;">0.92</div>
<div class="t" style="left:716px;top:305px;width:61px;height:25px;line-height:25px;text-align:center;font-size:12px;color:#222;">2.72</div>
<div class="t" style="left:778px;top:305px;width:62px;height:25px;line-height:25px;text-align:center;font-size:12px;color:#222;">3.34</div>
<div class="t" style="left:841px;top:305px;width:63px;height:25px;line-height:25px;text-align:center;font-size:12px;color:#222;">2.38</div>
<div class="t" style="left:905px;top:305px;width:35px;height:25px;line-height:25px;text-align:center;font-size:12px;color:#222;color:#1f8a1f">平</div>
<div class="t" style="left:941px;top:305px;width:36px;height:25px;line-height:25px;text-align:center;font-size:12px;color:#222;color:#1f8a1f">走</div>
<div class="t" style="left:978px;top:305px;width:54px;height:25px;line-height:25px;text-align:center;font-size:12px;color:#222;color:#d92424">大</div>
<div class="t" style="left:6px;top:331px;width:80px;height:25px;line-height:25px;text-align:center;font-size:12px;color:#222;color:#fff;-webkit-text-stroke:0.2px #fff">澳洲甲</div>
<div class="t" style="left:87px;top:331px;width:71px;height:25px;line-height:25px;text-align:center;font-size:12px;color:#222;">24-11-02</div>
<div class="t" style="left:159px;top:331px;width:154px;height:25px;line-height:25px;text-align:center;font-size:12px;color:#222;"><span style="color:#268a26">中央海岸水手</span></div>
<div class="t" style="left:314px;top:331px;width:84px;height:25px;line-height:25px;text-align:center;font-size:12px;color:#222;"><span style="color:#d81e1e">0-0</span>(0-0)</div>
<div class="t" style="left:399px;top:331px;width:35px;height:25px;line-height:25px;text-align:center;font-size:12px;color:#222;">6-1</div>
<div class="t" style="left:435px;top:331px;width:105px;height:25px;line-height:25px;text-align:center;font-size:12px;color:#222;">珀斯光荣</div>
<div class="t" style="left:541px;top:331px;width:45px;height:25px;line-height:25px;text-align:center;font-size:12px;color:#222;">0.90</div>
<div class="t" style="left:587px;top:331px;width:79px;height:25px;line-height:25px;text-align:center;font-size:12px;color:#222;">半/一</div>
<div class="t" style="left:667px;top:331px;width:48px;height:25px;line-height:25px;text-align:center;font-size:12px;color:#222;">0.99</div>
<div class="t" style="left:716px;top:331px;width:61px;height:25px;line-height:25px;text-align:center;font-size:12px;color:#222;">1.54</div>
<div class="t" style="left:778px;top:331px;width:62px;height:25px;line-height:25px;text-align:center;font-size:12px;color:#222;">4.39</div>
<div class="t" style="left:841px;top:331px;width:63px;height:25px;line-height:25px;text-align:center;font-size:12px;color:#222;">5.16</div>
<div class="t" style="left:905px;top:331px;width:35px;height:25px;line-height:25px;text-align:center;font-size:12px;color:#222;color:#1f8a1f">平</div>
<div class="t" style="left:941px;top:331px;width:36px;height:25px;line-height:25px;text-align:center;font-size:12px;color:#222;color:#1e1eaa">输</div>
<div class="t" style="left:978px;top:331px;width:54px;height:25px;line-height:25px;text-align:center;font-size:12px;color:#222;color:#1e1eaa">小</div>
<div class="t" style="left:5px;top:357px;width:1028px;height:25px;line-height:25px;text-align:center;font-size:12px;color:#222;letter-spacing:0.25px">近<span style="color:#d81e1e">10</span>场,胜2平3负5, 胜率:<span style="color:#d81e1e">20%</span> 让胜率:<span style="color:#d81e1e">40%</span> 大率:<span style="color:#d81e1e">70%</span> 单率:<span style="color:#d81e1e">50%</span></div>
<div style="left:5px;top:382px;width:1028px;height:25px;background:#dbe2ec"></div>
<div class="t" style="left:25px;top:386px;width:200px;height:25px;line-height:25px;font-size:12px;color:#1e2834;-webkit-text-stroke:0.4px #1e2834">墨尔本城</div>
<div class="t" style="left:445px;top:385px;width:14px;height:25px;line-height:25px;font-size:12px;color:#333">近</div>
<div class="sel" style="left:460px;top:388px;width:36px;height:15px;"><span style="font-size:12px;line-height:15px;font-family:'Liberation Serif',serif;left:5px;top:-1px;font-size:13.5px;">10</span><svg class="chev" style="top:4px" width="11" height="8" viewBox="0 0 11 8"><path d="M1 1.2 L5.5 5.9 L10 1.2" stroke="#000" stroke-width="2.2" fill="none"/></svg></div>
<div class="t" style="left:503px;top:385px;width:14px;height:25px;line-height:25px;font-size:12px;color:#333">场</div>
<div class="cb" style="left:518px;top:388px"></div>
<div class="t" style="left:536px;top:385px;width:30px;height:25px;line-height:25px;font-size:12px;color:#333">同客</div>
<div class="cb on" style="left:563px;top:388px"><svg width="13" height="13" viewBox="0 0 13 13"><path d="M2.6 6.6 L5.4 9.3 L10.5 3.2" stroke="#fff" stroke-width="2.1" fill="none"/></svg></div>
<div class="t" style="left:576px;top:385px;width:60px;height:25px;line-height:25px;font-size:12px;color:#333">澳洲甲</div>
<div class="cb on" style="left:612px;top:388px"><svg width="13" height="13" viewBox="0 0 13 13"><path d="M2.6 6.6 L5.4 9.3 L10.5 3.2" stroke="#fff" stroke-width="2.1" fill="none"/></svg></div>
<div class="t" style="left:625px;top:385px;width:60px;height:25px;line-height:25px;font-size:12px;color:#333">澳足总</div>
<div style="left:5px;top:407px;width:1028px;height:39px;background:#dbe2ec"></div>
<div style="left:5px;top:446px;width:1028px;height:26px;background:#fff"></div>
<div style="left:524px;top:446px;width:181px;height:26px;background:#fffaf6"></div>
<div style="left:705px;top:446px;width:195px;height:26px;background:#f0f7fc"></div>
<div style="left:5px;top:446px;width:81px;height:26px;background:#ff7300"></div>
<div style="left:5px;top:472px;width:1028px;height:26px;background:#f0f0f0"></div>
<div style="left:524px;top:472px;width:181px;height:26px;background:#fffaf6"></div>
<div style="left:705px;top:472px;width:195px;height:26px;background:#f0f7fc"></div>
<div style="left:5px;top:472px;width:81px;height:26px;background:#ff7300"></div>
<div style="left:5px;top:498px;width:1028px;height:26px;background:#fff"></div>
<div style="left:524px;top:498px;width:181px;height:26px;background:#fffaf6"></div>
<div style="left:705px;top:498px;width:195px;height:26px;background:#f0f7fc"></div>
<div style="left:5px;top:498px;width:81px;height:26px;background:#ff7300"></div>
<div style="left:5px;top:524px;width:1028px;height:26px;background:#f0f0f0"></div>
<div style="left:524px;top:524px;width:181px;height:26px;background:#fffaf6"></div>
<div style="left:705px;top:524px;width:195px;height:26px;background:#f0f7fc"></div>
<div style="left:5px;top:524px;width:81px;height:26px;background:#ff7300"></div>
<div style="left:5px;top:550px;width:1028px;height:26px;background:#fff"></div>
<div style="left:524px;top:550px;width:181px;height:26px;background:#fffaf6"></div>
<div style="left:705px;top:550px;width:195px;height:26px;background:#f0f7fc"></div>
<div style="left:5px;top:550px;width:81px;height:26px;background:#ff7300"></div>
<div style="left:5px;top:576px;width:1028px;height:26px;background:#f0f0f0"></div>
<div style="left:524px;top:576px;width:181px;height:26px;background:#fffaf6"></div>
<div style="left:705px;top:576px;width:195px;height:26px;background:#f0f7fc"></div>
<div style="left:5px;top:576px;width:81px;height:26px;background:#ff7300"></div>
<div style="left:5px;top:602px;width:1028px;height:26px;background:#fff"></div>
<div style="left:524px;top:602px;width:181px;height:26px;background:#fffaf6"></div>
<div style="left:705px;top:602px;width:195px;height:26px;background:#f0f7fc"></div>
<div style="left:5px;top:602px;width:81px;height:26px;background:#ff7300"></div>
<div style="left:5px;top:628px;width:1028px;height:26px;background:#f0f0f0"></div>
<div style="left:524px;top:628px;width:181px;height:26px;background:#fffaf6"></div>
<div style="left:705px;top:628px;width:195px;height:26px;background:#f0f7fc"></div>
<div style="left:5px;top:628px;width:81px;height:26px;background:#ff7300"></div>
<div style="left:5px;top:654px;width:1028px;height:26px;background:#fff"></div>
<div style="left:524px;top:654px;width:181px;height:26px;background:#fffaf6"></div>
<div style="left:705px;top:654px;width:195px;height:26px;background:#f0f7fc"></div>
<div style="left:5px;top:654px;width:81px;height:26px;background:#1fa37a"></div>
<div style="left:5px;top:680px;width:1028px;height:26px;background:#f0f0f0"></div>
<div style="left:524px;top:680px;width:181px;height:26px;background:#fffaf6"></div>
<div style="left:705px;top:680px;width:195px;height:26px;background:#f0f7fc"></div>
<div style="left:5px;top:680px;width:81px;height:26px;background:#ff7300"></div>
<div style="left:5px;top:706px;width:1028px;height:26px;background:#fff"></div>
<div style="left:5px;top:407px;width:1028px;height:1px;background:#bcbcbc"></div>
<div style="left:524px;top:427px;width:509px;height:1px;background:#bcbcbc"></div>
<div style="left:5px;top:446px;width:1028px;height:1px;background:#bcbcbc"></div>
<div style="left:5px;top:472px;width:1028px;height:1px;background:#bcbcbc"></div>
<div style="left:5px;top:498px;width:1028px;height:1px;background:#bcbcbc"></div>
<div style="left:5px;top:524px;width:1028px;height:1px;background:#bcbcbc"></div>
<div style="left:5px;top:550px;width:1028px;height:1px;background:#bcbcbc"></div>
<div style="left:5px;top:576px;width:1028px;height:1px;background:#bcbcbc"></div>
<div style="left:5px;top:602px;width:1028px;height:1px;background:#bcbcbc"></div>
<div style="left:5px;top:628px;width:1028px;height:1px;background:#bcbcbc"></div>
<div style="left:5px;top:654px;width:1028px;height:1px;background:#bcbcbc"></div>
<div style="left:5px;top:680px;width:1028px;height:1px;background:#bcbcbc"></div>
<div style="left:5px;top:706px;width:1028px;height:1px;background:#bcbcbc"></div>
<div style="left:5px;top:732px;width:1028px;height:1px;background:#bcbcbc"></div>
<div style="left:6px;top:472px;width:80px;height:1px;background:#ffc08c"></div>
<div style="left:6px;top:498px;width:80px;height:1px;background:#ffc08c"></div>
<div style="left:6px;top:524px;width:80px;height:1px;background:#ffc08c"></div>
<div style="left:6px;top:550px;width:80px;height:1px;background:#ffc08c"></div>
<div style="left:6px;top:576px;width:80px;height:1px;background:#ffc08c"></div>
<div style="left:6px;top:602px;width:80px;height:1px;background:#ffc08c"></div>
<div style="left:6px;top:628px;width:80px;height:1px;background:#ffc08c"></div>
<div style="left:6px;top:654px;width:80px;height:1px;background:#cccaa7"></div>
<div style="left:6px;top:680px;width:80px;height:1px;background:#cccaa7"></div>
<div style="left:5px;top:407px;width:1px;height:326px;background:#bcbcbc"></div>
<div style="left:86px;top:407px;width:1px;height:300px;background:#bcbcbc"></div>
<div style="left:161px;top:407px;width:1px;height:300px;background:#bcbcbc"></div>
<div style="left:288px;top:407px;width:1px;height:300px;background:#bcbcbc"></div>
<div style="left:376px;top:407px;width:1px;height:300px;background:#bcbcbc"></div>
<div style="left:414px;top:407px;width:1px;height:300px;background:#bcbcbc"></div>
<div style="left:524px;top:407px;width:1px;height:300px;background:#bcbcbc"></div>
<div style="left:572px;top:427px;width:1px;height:280px;background:#bcbcbc"></div>
<div style="left:654px;top:427px;width:1px;height:280px;background:#bcbcbc"></div>
<div style="left:705px;top:407px;width:1px;height:300px;background:#bcbcbc"></div>
<div style="left:769px;top:427px;width:1px;height:280px;background:#bcbcbc"></div>
<div style="left:834px;top:427px;width:1px;height:280px;background:#bcbcbc"></div>
<div style="left:900px;top:407px;width:1px;height:300px;background:#bcbcbc"></div>
<div style="left:937px;top:427px;width:1px;height:280px;background:#bcbcbc"></div>
<div style="left:975px;top:427px;width:1px;height:280px;background:#bcbcbc"></div>
<div style="left:1032px;top:407px;width:1px;height:326px;background:#bcbcbc"></div>
<div class="t" style="left:6px;top:409px;width:80px;height:38px;line-height:38px;text-align:center;font-size:12px;color:#333;">类型</div>
<div class="t" style="left:87px;top:409px;width:74px;height:38px;line-height:38px;text-align:center;font-size:12px;color:#333;">日期</div>
<div class="t" style="left:162px;top:409px;width:126px;height:38px;line-height:38px;text-align:center;font-size:12px;color:#333;">主场</div>
<div class="t" style="left:289px;top:409px;width:87px;height:38px;line-height:38px;text-align:center;font-size:12px;color:#333;">比分(半场)</div>
<div class="t" style="left:377px;top:409px;width:37px;height:38px;line-height:38px;text-align:center;font-size:12px;color:#333;">角球</div>
<div class="t" style="left:415px;top:409px;width:109px;height:38px;line-height:38px;text-align:center;font-size:12px;color:#333;">客场</div>
<div class="t" style="left:525px;top:429px;width:47px;height:18px;line-height:18px;text-align:center;font-size:12px;color:#333;">主</div>
<div class="t" style="left:573px;top:429px;width:81px;height:18px;line-height:18px;text-align:center;font-size:12px;color:#333;">让球</div>
<div class="t" style="left:655px;top:429px;width:50px;height:18px;line-height:18px;text-align:center;font-size:12px;color:#333;">客</div>
<div class="t" style="left:706px;top:429px;width:63px;height:18px;line-height:18px;text-align:center;font-size:12px;color:#333;">主</div>
<div class="t" style="left:770px;top:429px;width:64px;height:18px;line-height:18px;text-align:center;font-size:12px;color:#333;">和</div>
<div class="t" style="left:835px;top:429px;width:65px;height:18px;line-height:18px;text-align:center;font-size:12px;color:#333;">客</div>
<div class="t" style="left:901px;top:429px;width:36px;height:18px;line-height:18px;text-align:center;font-size:12px;color:#333;">胜负</div>
<div class="t" style="left:938px;top:429px;width:37px;height:18px;line-height:18px;text-align:center;font-size:12px;color:#333;">让球</div>
<div class="t" style="left:976px;top:429px;width:56px;height:18px;line-height:18px;text-align:center;font-size:12px;color:#333;">进球数</div>
<div class="sel" style="left:556px;top:408px;width:58px;height:17px;"><span style="font-size:13.33px;line-height:17px;">Crow*</span><svg class="chev" style="top:4px" width="11" height="8" viewBox="0 0 11 8"><path d="M1 1.2 L5.5 5.9 L10 1.2" stroke="#000" stroke-width="2.2" fill="none"/></svg></div>
<div class="sel" style="left:624px;top:408px;width:48px;height:17px;"><span style="font-size:13.33px;line-height:17px;">终指</span><svg class="chev" style="top:4px" width="11" height="8" viewBox="0 0 11 8"><path d="M1 1.2 L5.5 5.9 L10 1.2" stroke="#000" stroke-width="2.2" fill="none"/></svg></div>
<div class="sel" style="left:739px;top:408px;width:67px;height:17px;"><span style="font-size:13.33px;line-height:17px;">平均值</span><svg class="chev" style="top:4px" width="11" height="8" viewBox="0 0 11 8"><path d="M1 1.2 L5.5 5.9 L10 1.2" stroke="#000" stroke-width="2.2" fill="none"/></svg></div>
<div class="sel" style="left:817px;top:408px;width:48px;height:17px;"><span style="font-size:13.33px;line-height:17px;">终指</span><svg class="chev" style="top:4px" width="11" height="8" viewBox="0 0 11 8"><path d="M1 1.2 L5.5 5.9 L10 1.2" stroke="#000" stroke-width="2.2" fill="none"/></svg></div>
<div class="sel" style="left:942px;top:408px;width:48px;height:17px;"><span style="font-size:13.33px;line-height:17px;">全场</span><svg class="chev" style="top:4px" width="11" height="8" viewBox="0 0 11 8"><path d="M1 1.2 L5.5 5.9 L10 1.2" stroke="#000" stroke-width="2.2" fill="none"/></svg></div>
<div class="t" style="left:6px;top:448px;width:80px;height:25px;line-height:25px;text-align:center;font-size:12px;color:#222;color:#fff;-webkit-text-stroke:0.2px #fff">澳洲甲</div>
<div class="t" style="left:87px;top:448px;width:74px;height:25px;line-height:25px;text-align:center;font-size:12px;color:#222;">24-12-21</div>
<div class="t" style="left:162px;top:448px;width:126px;height:25px;line-height:25px;text-align:center;font-size:12px;color:#222;">墨尔本胜利</div>
<div class="t" style="left:289px;top:448px;width:87px;height:25px;line-height:25px;text-align:center;font-size:12px;color:#222;"><span style="color:#d81e1e">1-1</span>(0-1)</div>
<div class="t" style="left:377px;top:448px;width:37px;height:25px;line-height:25px;text-align:center;font-size:12px;color:#222;">10-3</div>
<div class="t" style="left:415px;top:448px;width:109px;height:25px;line-height:25px;text-align:center;font-size:12px;color:#222;"><span style="color:#268a26">墨尔本城</span></div>
<div class="t" style="left:525px;top:448px;width:47px;height:25px;line-height:25px;text-align:center;font-size:12px;color:#222;">0.93</div>
<div class="t" style="left:573px;top:448px;width:81px;height:25px;line-height:25px;text-align:center;font-size:12px;color:#222;">半球</div>
<div class="t" style="left:655px;top:448px;width:50px;height:25px;line-height:25px;text-align:center;font-size:12px;color:#222;">0.96</div>
<div class="t" style="left:706px;top:448px;width:63px;height:25px;line-height:25px;text-align:center;font-size:12px;color:#222;">1.97</div>
<div class="t" style="left:770px;top:448px;width:64px;height:25px;line-height:25px;text-align:center;font-size:12px;color:#222;">3.56</div>
<div class="t" style="left:835px;top:448px;width:65px;height:25px;line-height:25px;text-align:center;font-size:12px;color:#222;">3.50</div>
<div class="t" style="left:901px;top:448px;width:36px;height:25px;line-height:25px;text-align:center;font-size:12px;color:#222;color:#1f8a1f">平</div>
<div class="t" style="left:938px;top:448px;width:37px;height:25px;line-height:25px;text-align:center;font-size:12px;color:#222;color:#d92424">赢</div>
<div class="t" style="left:976px;top:448px;width:56px;height:25px;line-height:25px;text-align:center;font-size:12px;color:#222;color:#1e1eaa">小</div>
<div class="t" style="left:6px;top:474px;width:80px;height:25px;line-height:25px;text-align:center;font-size:12px;color:#222;color:#fff;-webkit-text-stroke:0.2px #fff">澳洲甲</div>
<div class="t" style="left:87px;top:474px;width:74px;height:25px;line-height:25px;text-align:center;font-size:12px;color:#222;">24-12-15</div>
<div class="t" style="left:162px;top:474px;width:126px;height:25px;line-height:25px;text-align:center;font-size:12px;color:#222;"><span style="color:#268a26">墨尔本城</span></div>
<div class="t" style="left:289px;top:474px;width:87px;height:25px;line-height:25px;text-align:center;font-size:12px;color:#222;"><span style="color:#d81e1e">2-2</span>(1-0)</div>
<div class="t" style="left:377px;top:474px;width:37px;height:25px;line-height:25px;text-align:center;font-size:12px;color:#222;">3-3</div>
<div class="t" style="left:415px;top:474px;width:109px;height:25px;line-height:25px;text-align:center;font-size:12px;color:#222;">奥克兰FC</div>
<div class="t" style="left:525px;top:474px;width:47px;height:25px;line-height:25px;text-align:center;font-size:12px;color:#222;">0.91</div>
<div class="t" style="left:573px;top:474px;width:81px;height:25px;line-height:25px;text-align:center;font-size:12px;color:#222;">平手</div>
<div class="t" style="left:655px;top:474px;width:50px;height:25px;line-height:25px;text-align:center;font-size:12px;color:#222;">0.98</div>
<div class="t" style="left:706px;top:474px;width:63px;height:25px;line-height:25px;text-align:center;font-size:12px;color:#222;">2.29</div>
<div class="t" style="left:770px;top:474px;width:64px;height:25px;line-height:25px;text-align:center;font-size:12px;color:#222;">3.48</div>
<div class="t" style="left:835px;top:474px;width:65px;height:25px;line-height:25px;text-align:center;font-size:12px;color:#222;">2.87</div>
<div class="t" style="left:901px;top:474px;width:36px;height:25px;line-height:25px;text-align:center;font-size:12px;color:#222;color:#1f8a1f">平</div>
<div class="t" style="left:938px;top:474px;width:37px;height:25px;line-height:25px;text-align:center;font-size:12px;color:#222;color:#1f8a1f">走</div>
<div class="t" style="left:976px;top:474px;width:56px;height:25px;line-height:25px;text-align:center;font-size:12px;color:#222;color:#d92424">大</div>
<div class="t" style="left:6px;top:500px;width:80px;height:25px;line-height:25px;text-align:center;font-size:12px;color:#222;color:#fff;-webkit-text-stroke:0.2px #fff">澳洲甲</div>
<div class="t" style="left:87px;top:500px;width:74px;height:25px;line-height:25px;text-align:center;font-size:12px;color:#222;">24-12-06</div>
<div class="t" style="left:162px;top:500px;width:126px;height:25px;line-height:25px;text-align:center;font-size:12px;color:#222;">布里斯班狮吼</div>
<div class="t" style="left:289px;top:500px;width:87px;height:25px;line-height:25px;text-align:center;font-size:12px;color:#222;"><span style="color:#d81e1e">1-4</span>(0-2)</div>
<div class="t" style="left:377px;top:500px;width:37px;height:25px;line-height:25px;text-align:center;font-size:12px;color:#222;">2-1</div>
<div class="t" style="left:415px;top:500px;width:109px;height:25px;line-height:25px;text-align:center;font-size:12px;color:#222;"><span style="color:#268a26">墨尔本城</span></div>
<div class="t" style="left:525px;top:500px;width:47px;height:25px;line-height:25px;text-align:center;font-size:12px;color:#222;">0.95</div>
<div class="t" style="left:573px;top:500px;width:81px;height:25px;line-height:25px;text-align:center;font-size:12px;color:#222;">受平/半</div>
<div class="t" style="left:655px;top:500px;width:50px;height:25px;line-height:25px;text-align:center;font-size:12px;color:#222;">0.94</div>
<div class="t" style="left:706px;top:500px;width:63px;height:25px;line-height:25px;text-align:center;font-size:12px;color:#222;">3.01</div>
<div class="t" style="left:770px;top:500px;width:64px;height:25px;line-height:25px;text-align:center;font-size:12px;color:#222;">3.72</div>
<div class="t" style="left:835px;top:500px;width:65px;height:25px;line-height:25px;text-align:center;font-size:12px;color:#222;">2.12</div>
<div class="t" style="left:901px;top:500px;width:36px;height:25px;line-height:25px;text-align:center;font-size:12px;color:#222;color:#d92424">胜</div>
<div class="t" style="left:938px;top:500px;width:37px;height:25px;line-height:25px;text-align:center;font-size:12px;color:#222;color:#d92424">赢</div>
<div class="t" style="left:976px;top:500px;width:56px;height:25px;line-height:25px;text-align:center;font-size:12px;color:#222;color:#d92424">大</div>
<div class="t" style="left:6px;top:526px;width:80px;height:25px;line-height:25px;text-align:center;font-size:12px;color:#222;color:#fff;-webkit-text-stroke:0.2px #fff">澳洲甲</div>
<div class="t" style="left:87px;top:526px;width:74px;height:25px;line-height:25px;text-align:center;font-size:12px;color:#222;">24-11-30</div>
<div class="t" style="left:162px;top:526px;width:126px;height:25px;line-height:25px;text-align:center;font-size:12px;color:#222;"><span style="color:#268a26">墨尔本城</span></div>
<div class="t" style="left:289px;top:526px;width:87px;height:25px;line-height:25px;text-align:center;font-size:12px;color:#222;"><span style="color:#d81e1e">0-2</span>(0-1)</div>
<div class="t" style="left:377px;top:526px;width:37px;height:25px;line-height:25px;text-align:center;font-size:12px;color:#222;">7-2</div>
<div class="t" style="left:415px;top:526px;width:109px;height:25px;line-height:25px;text-align:center;font-size:12px;color:#222;">西悉尼流浪者</div>
<div class="t" style="left:525px;top:526px;width:47px;height:25px;line-height:25px;text-align:center;font-size:12px;color:#222;">0.91</div>
<div class="t" style="left:573px;top:526px;width:81px;height:25px;line-height:25px;text-align:center;font-size:12px;color:#222;">半球</div>
<div class="t" style="left:655px;top:526px;width:50px;height:25px;line-height:25px;text-align:center;font-size:12px;color:#222;">0.98</div>
<div class="t" style="left:706px;top:526px;width:63px;height:25px;line-height:25px;text-align:center;font-size:12px;color:#222;">1.71</div>
<div class="t" style="left:770px;top:526px;width:64px;height:25px;line-height:25px;text-align:center;font-size:12px;color:#222;">4.05</div>
<div class="t" style="left:835px;top:526px;width:65px;height:25px;line-height:25px;text-align:center;font-size:12px;color:#222;">4.19</div>
<div class="t" style="left:901px;top:526px;width:36px;height:25px;line-height:25px;text-align:center;font-size:12px;color:#222;color:#1e1eaa">负</div>
<div class="t" style="left:938px;top:526px;width:37px;height:25px;line-height:25px;text-align:center;font-size:12px;color:#222;color:#1e1eaa">输</div>
<div class="t" style="left:976px;top:526px;width:56px;height:25px;line-height:25px;text-align:center;font-size:12px;color:#222;color:#1e1eaa">小</div>
<div class="t" style="left:6px;top:552px;width:80px;height:25px;line-height:25px;text-align:center;font-size:12px;color:#222;color:#fff;-webkit-text-stroke:0.2px #fff">澳洲甲</div>
<div class="t" style="left:87px;top:552px;width:74px;height:25px;line-height:25px;text-align:center;font-size:12px;color:#222;">24-11-10</div>
<div class="t" style="left:162px;top:552px;width:126px;height:25px;line-height:25px;text-align:center;font-size:12px;color:#222;">珀斯光荣</div>
<div class="t" style="left:289px;top:552px;width:87px;height:25px;line-height:25px;text-align:center;font-size:12px;color:#222;"><span style="color:#d81e1e">0-5</span>(0-2)</div>
<div class="t" style="left:377px;top:552px;width:37px;height:25px;line-height:25px;text-align:center;font-size:12px;color:#222;">2-8</div>
<div class="t" style="left:415px;top:552px;width:109px;height:25px;line-height:25px;text-align:center;font-size:12px;color:#222;"><span style="color:#268a26">墨尔本城</span></div>
<div class="t" style="left:525px;top:552px;width:47px;height:25px;line-height:25px;text-align:center;font-size:12px;color:#222;">0.81</div>
<div class="t" style="left:573px;top:552px;width:81px;height:25px;line-height:25px;text-align:center;font-size:12px;color:#222;">受平/半</div>
<div class="t" style="left:655px;top:552px;width:50px;height:25px;line-height:25px;text-align:center;font-size:12px;color:#222;">1.08</div>
<div class="t" style="left:706px;top:552px;width:63px;height:25px;line-height:25px;text-align:center;font-size:12px;color:#222;">2.98</div>
<div class="t" style="left:770px;top:552px;width:64px;height:25px;line-height:25px;text-align:center;font-size:12px;color:#222;">3.62</div>
<div class="t" style="left:835px;top:552px;width:65px;height:25px;line-height:25px;text-align:center;font-size:12px;color:#222;">2.17</div>
<div class="t" style="left:901px;top:552px;width:36px;height:25px;line-height:25px;text-align:center;font-size:12px;color:#222;color:#d92424">胜</div>
<div class="t" style="left:938px;top:552px;width:37px;height:25px;line-height:25px;text-align:center;font-size:12px;color:#222;color:#d92424">赢</div>
<div class="t" style="left:976px;top:552px;width:56px;height:25px;line-height:25px;text-align:center;font-size:12px;color:#222;color:#d92424">大</div>
<div class="t" style="left:6px;top:578px;width:80px;height:25px;line-height:25px;text-align:center;font-size:12px;color:#222;color:#fff;-webkit-text-stroke:0.2px #fff">澳洲甲</div>
<div class="t" style="left:87px;top:578px;width:74px;height:25px;line-height:25px;text-align:center;font-size:12px;color:#222;">24-11-04</div>
<div class="t" style="left:162px;top:578px;width:126px;height:25px;line-height:25px;text-align:center;font-size:12px;color:#222;">西部联</div>
<div class="t" style="left:289px;top:578px;width:87px;height:25px;line-height:25px;text-align:center;font-size:12px;color:#222;"><span style="color:#d81e1e">0-1</span>(0-0)</div>
<div class="t" style="left:377px;top:578px;width:37px;height:25px;line-height:25px;text-align:center;font-size:12px;color:#222;">2-3</div>
<div class="t" style="left:415px;top:578px;width:109px;height:25px;line-height:25px;text-align:center;font-size:12px;color:#222;"><span style="color:#268a26">墨尔本城</span></div>
<div class="t" style="left:525px;top:578px;width:47px;height:25px;line-height:25px;text-align:center;font-size:12px;color:#222;">0.82</div>
<div class="t" style="left:573px;top:578px;width:81px;height:25px;line-height:25px;text-align:center;font-size:12px;color:#222;">受半球</div>
<div class="t" style="left:655px;top:578px;width:50px;height:25px;line-height:25px;text-align:center;font-size:12px;color:#222;">1.07</div>
<div class="t" style="left:706px;top:578px;width:63px;height:25px;line-height:25px;text-align:center;font-size:12px;color:#222;">3.34</div>
<div class="t" style="left:770px;top:578px;width:64px;height:25px;line-height:25px;text-align:center;font-size:12px;color:#222;">3.77</div>
<div class="t" style="left:835px;top:578px;width:65px;height:25px;line-height:25px;text-align:center;font-size:12px;color:#222;">1.97</div>
<div class="t" style="left:901px;top:578px;width:36px;height:25px;line-height:25px;text-align:center;font-size:12px;color:#222;color:#d92424">胜</div>
<div class="t" style="left:938px;top:578px;width:37px;height:25px;line-height:25px;text-align:center;font-size:12px;color:#222;color:#d92424">赢</div>
<div class="t" style="left:976px;top:578px;width:56px;height:25px;line-height:25px;text-align:center;font-size:12px;color:#222;color:#1e1eaa">小</div>
<div class="t" style="left:6px;top:604px;width:80px;height:25px;line-height:25px;text-align:center;font-size:12px;color:#222;color:#fff;-webkit-text-stroke:0.2px #fff">澳洲甲</div>
<div class="t" style="left:87px;top:604px;width:74px;height:25px;line-height:25px;text-align:center;font-size:12px;color:#222;">24-10-26</div>
<div class="t" style="left:162px;top:604px;width:126px;height:25px;line-height:25px;text-align:center;font-size:12px;color:#222;"><span style="color:#268a26">墨尔本城</span></div>
<div class="t" style="left:289px;top:604px;width:87px;height:25px;line-height:25px;text-align:center;font-size:12px;color:#222;"><span style="color:#d81e1e">1-3</span>(0-3)</div>
<div class="t" style="left:377px;top:604px;width:37px;height:25px;line-height:25px;text-align:center;font-size:12px;color:#222;">9-2</div>
<div class="t" style="left:415px;top:604px;width:109px;height:25px;line-height:25px;text-align:center;font-size:12px;color:#222;">墨尔本胜利</div>
<div class="t" style="left:525px;top:604px;width:47px;height:25px;line-height:25px;text-align:center;font-size:12px;color:#222;">1.06</div>
<div class="t" style="left:573px;top:604px;width:81px;height:25px;line-height:25px;text-align:center;font-size:12px;color:#222;">平手</div>
<div class="t" style="left:655px;top:604px;width:50px;height:25px;line-height:25px;text-align:center;font-size:12px;color:#222;">0.83</div>
<div class="t" style="left:706px;top:604px;width:63px;height:25px;line-height:25px;text-align:center;font-size:12px;color:#222;">2.72</div>
<div class="t" style="left:770px;top:604px;width:64px;height:25px;line-height:25px;text-align:center;font-size:12px;color:#222;">3.39</div>
<div class="t" style="left:835px;top:604px;width:65px;height:25px;line-height:25px;text-align:center;font-size:12px;color:#222;">2.44</div>
<div class="t" style="left:901px;top:604px;width:36px;height:25px;line-height:25px;text-align:center;font-size:12px;color:#222;color:#1e1eaa">负</div>
<div class="t" style="left:938px;top:604px;width:37px;height:25px;line-height:25px;text-align:center;font-size:12px;color:#222;color:#1e1eaa">输</div>
<div class="t" style="left:976px;top:604px;width:56px;height:25px;line-height:25px;text-align:center;font-size:12px;color:#222;color:#d92424">大</div>
<div class="t" style="left:6px;top:630px;width:80px;height:25px;line-height:25px;text-align:center;font-size:12px;color:#222;color:#fff;-webkit-text-stroke:0.2px #fff">澳洲甲</div>
<div class="t" style="left:87px;top:630px;width:74px;height:25px;line-height:25px;text-align:center;font-size:12px;color:#222;">24-10-19</div>
<div class="t" style="left:162px;top:630px;width:126px;height:25px;line-height:25px;text-align:center;font-size:12px;color:#222;">纽卡斯尔喷气机</div>
<div class="t" style="left:289px;top:630px;width:87px;height:25px;line-height:25px;text-align:center;font-size:12px;color:#222;"><span style="color:#d81e1e">0-1</span>(0-1)</div>
<div class="t" style="left:377px;top:630px;width:37px;height:25px;line-height:25px;text-align:center;font-size:12px;color:#222;">8-6</div>
<div class="t" style="left:415px;top:630px;width:109px;height:25px;line-height:25px;text-align:center;font-size:12px;color:#222;"><span style="color:#268a26">墨尔本城<span class="rc">1</span></span></div>
<div class="t" style="left:525px;top:630px;width:47px;height:25px;line-height:25px;text-align:center;font-size:12px;color:#222;">0.96</div>
<div class="t" style="left:573px;top:630px;width:81px;height:25px;line-height:25px;text-align:center;font-size:12px;color:#222;">受平/半</div>
<div class="t" style="left:655px;top:630px;width:50px;height:25px;line-height:25px;text-align:center;font-size:12px;color:#222;">0.93</div>
<div class="t" style="left:706px;top:630px;width:63px;height:25px;line-height:25px;text-align:center;font-size:12px;color:#222;">2.97</div>
<div class="t" style="left:770px;top:630px;width:64px;height:25px;line-height:25px;text-align:center;font-size:12px;color:#222;">3.64</div>
<div class="t" style="left:835px;top:630px;width:65px;height:25px;line-height:25px;text-align:center;font-size:12px;color:#222;">2.17</div>
<div class="t" style="left:901px;top:630px;width:36px;height:25px;line-height:25px;text-align:center;font-size:12px;color:#222;color:#d92424">胜</div>
<div class="t" style="left:938px;top:630px;width:37px;height:25px;line-height:25px;text-align:center;font-size:12px;color:#222;color:#d92424">赢</div>
<div class="t" style="left:976px;top:630px;width:56px;height:25px;line-height:25px;text-align:center;font-size:12px;color:#222;color:#1e1eaa">小</div>
<div class="t" style="left:6px;top:656px;width:80px;height:25px;line-height:25px;text-align:center;font-size:12px;color:#222;color:#fff;-webkit-text-stroke:0.2px #fff">澳足总</div>
<div class="t" style="left:87px;top:656px;width:74px;height:25px;line-height:25px;text-align:center;font-size:12px;color:#222;">24-08-03</div>
<div class="t" style="left:162px;top:656px;width:126px;height:25px;line-height:25px;text-align:center;font-size:12px;color:#222;">珀斯光荣(中)</div>
<div class="t" style="left:289px;top:656px;width:87px;height:25px;line-height:25px;text-align:center;font-size:12px;color:#222;"><span style="color:#d81e1e">4-4</span>(1-1)</div>
<div class="t" style="left:377px;top:656px;width:37px;height:25px;line-height:25px;text-align:center;font-size:12px;color:#222;">3-1</div>
<div class="t" style="left:415px;top:656px;width:109px;height:25px;line-height:25px;text-align:center;font-size:12px;color:#222;"><span style="color:#268a26">墨尔本城</span></div>
<div class="t" style="left:525px;top:656px;width:47px;height:25px;line-height:25px;text-align:center;font-size:12px;color:#222;">0.73</div>
<div class="t" style="left:573px;top:656px;width:81px;height:25px;line-height:25px;text-align:center;font-size:12px;color:#222;">受平/半</div>
<div class="t" style="left:655px;top:656px;width:50px;height:25px;line-height:25px;text-align:center;font-size:12px;color:#222;">1.09</div>
<div class="t" style="left:706px;top:656px;width:63px;height:25px;line-height:25px;text-align:center;font-size:12px;color:#222;">2.70</div>
<div class="t" style="left:770px;top:656px;width:64px;height:25px;line-height:25px;text-align:center;font-size:12px;color:#222;">3.84</div>
<div class="t" style="left:835px;top:656px;width:65px;height:25px;line-height:25px;text-align:center;font-size:12px;color:#222;">2.19</div>
<div class="t" style="left:901px;top:656px;width:36px;height:25px;line-height:25px;text-align:center;font-size:12px;color:#222;color:#1f8a1f">平</div>
<div class="t" style="left:938px;top:656px;width:37px;height:25px;line-height:25px;text-align:center;font-size:12px;color:#222;color:#1e1eaa">输</div>
<div class="t" style="left:976px;top:656px;width:56px;height:25px;line-height:25px;text-align:center;font-size:12px;color:#222;color:#d92424">大</div>
<div class="t" style="left:6px;top:682px;width:80px;height:25px;line-height:25px;text-align:center;font-size:12px;color:#222;color:#fff;-webkit-text-stroke:0.2px #fff">澳洲甲</div>
<div class="t" style="left:87px;top:682px;width:74px;height:25px;line-height:25px;text-align:center;font-size:12px;color:#222;">24-05-05</div>
<div class="t" style="left:162px;top:682px;width:126px;height:25px;line-height:25px;text-align:center;font-size:12px;color:#222;"><span class="rc">1</span>墨尔本胜利</div>
<div class="t" style="left:289px;top:682px;width:87px;height:25px;line-height:25px;text-align:center;font-size:12px;color:#222;"><span style="color:#d81e1e">1-1</span>(0-1)</div>
<div class="t" style="left:377px;top:682px;width:37px;height:25px;line-height:25px;text-align:center;font-size:12px;color:#222;">2-13</div>
<div class="t" style="left:415px;top:682px;width:109px;height:25px;line-height:25px;text-align:center;font-size:12px;color:#222;"><span style="color:#268a26">墨尔本城<span class="rc">1</span></span></div>
<div class="t" style="left:525px;top:682px;width:47px;height:25px;line-height:25px;text-align:center;font-size:12px;color:#222;">0.92</div>
<div class="t" style="left:573px;top:682px;width:81px;height:25px;line-height:25px;text-align:center;font-size:12px;color:#222;">平手</div>
<div class="t" style="left:655px;top:682px;width:50px;height:25px;line-height:25px;text-align:center;font-size:12px;color:#222;">0.96</div>
<div class="t" style="left:706px;top:682px;width:63px;height:25px;line-height:25px;text-align:center;font-size:12px;color:#222;">2.45</div>
<div class="t" style="left:770px;top:682px;width:64px;height:25px;line-height:25px;text-align:center;font-size:12px;color:#222;">3.55</div>
<div class="t" style="left:835px;top:682px;width:65px;height:25px;line-height:25px;text-align:center;font-size:12px;color:#222;">2.62</div>
<div class="t" style="left:901px;top:682px;width:36px;height:25px;line-height:25px;text-align:center;font-size:12px;color:#222;color:#1f8a1f">平</div>
<div class="t" style="left:938px;top:682px;width:37px;height:25px;line-height:25px;text-align:center;font-size:12px;color:#222;color:#1f8a1f">走</div>
<div class="t" style="left:976px;top:682px;width:56px;height:25px;line-height:25px;text-align:center;font-size:12px;color:#222;color:#1e1eaa">小</div>
<div class="t" style="left:5px;top:708px;width:1028px;height:25px;line-height:25px;text-align:center;font-size:12px;color:#222;letter-spacing:0.25px">近<span style="color:#d81e1e">10</span>场,胜4平4负2, 胜率:<span style="color:#d81e1e">40%</span> 让胜率:<span style="color:#d81e1e">50%</span> 大率:<span style="color:#d81e1e">50%</span> 单率:<span style="color:#d81e1e">40%</span></div>
</body></html>
